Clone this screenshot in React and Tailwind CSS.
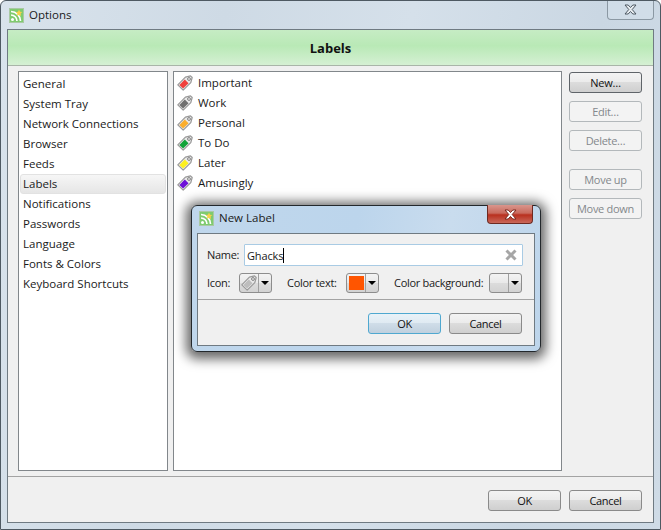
import React from 'react';

const font = { fontFamily: '"Open Sans", "Noto Sans", sans-serif' };

const categories = [
  'General',
  'System Tray',
  'Network Connections',
  'Browser',
  'Feeds',
  'Labels',
  'Notifications',
  'Passwords',
  'Language',
  'Fonts & Colors',
  'Keyboard Shortcuts'
];

const labels = [
  { name: 'Important', color: '#f0403c' },
  { name: 'Work', color: '#6f6f6f' },
  { name: 'Personal', color: '#fbae2c' },
  { name: 'To Do', color: '#12a33a' },
  { name: 'Later', color: '#fdf01e' },
  { name: 'Amusingly', color: '#6d12d8' }
];

const TagIcon = ({ color = '#bdbdbd' }) => (
  <svg width="16" height="16" viewBox="0 0 16 16" className="shrink-0">
    <path d="M0.800 9.800 8.400 2.200 13.500 0.800 15.200 2.500 13.800 7.600 6.200 15.200z" fill="#e9e9e9" stroke="#9a9a9a" strokeWidth="1.200" strokeLinejoin="round" />
    <path d="M2.400 9.900 7.800 4.500 11.500 8.200 6.100 13.600z" fill={color} />
    <circle cx="12" cy="4" r="1.400" fill="#fdfdfd" stroke="#6f6f6f" strokeWidth="0.900" />
  </svg>
);

const AppIcon = () => (
  <svg width="15" height="15" viewBox="0 0 15 15" className="shrink-0">
    <rect x="0.500" y="0.500" width="14" height="14" fill="#7fcb6f" stroke="#a9c9a4" />
    <circle cx="3.500" cy="11.500" r="1.500" fill="#fff" />
    <path d="M2 7a6 6 0 0 1 6 6M2 3.500A9.500 9.500 0 0 1 11.500 13" fill="none" stroke="#fff" strokeWidth="1.700" />
    <path d="M10 1.500l1 2.200 2.300.3-1.700 1.600.5 2.300-2.100-1.200-2.100 1.200.5-2.300L6.700 4l2.300-.3z" fill="#f8d24a" />
  </svg>
);

const CloseGlyph = ({ light }) => (
  <svg width="13" height="11" viewBox="0 0 13 11">
    <path
      d="M1 1h3.200l2.300 2.500L8.800 1H12L8.200 5.500 12 10H8.800L6.500 7.500 4.200 10H1l3.800-4.500z"
      fill={light ? '#fff' : '#e8edf1'}
      stroke={light ? '#7a2a20' : '#4d5862'}
      strokeWidth="1"
      strokeLinejoin="round"
    />
  </svg>
);

const DialogButton = ({ children, disabled, focused, strong, className = '' }) => {
  let look = 'border-[#8a8a8a] bg-[linear-gradient(#f3f3f3_0%,#ebebeb_48%,#dcdcdc_50%,#cfcfcf_100%)] text-[#111]';
  if (disabled) look = 'border-[#b3b8bb] bg-[#f3f3f3] text-[#84888c]';
  if (strong) look = 'border-[#5f6469] bg-[linear-gradient(#f3f3f3_0%,#ebebeb_48%,#dcdcdc_50%,#cfcfcf_100%)] text-[#111]';
  if (focused) look = 'border-[#4fa8d0] bg-[linear-gradient(#e9f2f8_0%,#dfeaf2_48%,#cfdde8_50%,#c0d0de_100%)] text-[#111]';
  return (
    <button
      type="button"
      className={`w-[73px] h-[21px] rounded-[3px] border text-[11px] tracking-[-0.3px] leading-none flex items-center justify-center ${look} ${className}`}
    >
      {children}
    </button>
  );
};

const DropButton = ({ children }) => (
  <div className="h-[20px] w-[33px] shrink-0 rounded-[3px] border border-[#8d8d8d] bg-[linear-gradient(#f3f3f3_0%,#e9e9e9_48%,#dcdcdc_50%,#d2d2d2_100%)] flex">
    <div className="flex-1 flex items-center justify-center border-r border-[#a0a0a0]">{children}</div>
    <div className="w-[12px] flex items-center justify-center">
      <span className="w-0 h-0 border-x-[4px] border-x-transparent border-t-[4px] border-t-black" />
    </div>
  </div>
);

const NewLabelDialog = () => (
  <div className="absolute left-[190px] top-[204px] w-[350px] h-[147px] rounded-[6px] border border-[#23282c] bg-[linear-gradient(100deg,#c0d7ec_0%,#bcd5ec_45%,#c9dcee_70%,#bdd5eb_100%)] shadow-[0_2px_12px_5px_rgba(0,0,0,0.6)] flex flex-col">
    <div className="h-[27px] shrink-0 pl-[7px] pb-[3px] flex items-center gap-[5px] relative">
      <AppIcon />
      <span className="text-[11.5px] text-[#1a1a1a]">New Label</span>
      <div className="absolute right-[7px] top-[-1px] w-[46px] h-[19px] rounded-b-[4px] border border-t-0 border-[#6d2a22] bg-[linear-gradient(#d9958c_0%,#c96a5d_45%,#b9301f_55%,#c9685a_100%)] flex items-center justify-center">
        <CloseGlyph light />
      </div>
    </div>
    <div className="mx-[5px] h-[113px] border border-[#6f7a82] bg-[#f0f0f0] flex flex-col">
      <div className="h-[66px] shrink-0 border-b border-[#a3a3a3] px-[9px] pt-[10px] flex flex-col gap-[7px]">
        <div className="flex items-center h-[22px]">
          <span className="text-[11px] tracking-[-0.3px] text-[#1a1a1a] w-[37px] shrink-0">Name:</span>
          <div className="w-[279px] h-[22px] border border-[#a9cbe4] bg-white rounded-[1px] pl-[2px] pr-[5px] flex items-center justify-between">
            <span className="text-[11px] tracking-[-0.15px] text-[#1a1a1a] border-r border-black leading-[15px]">Ghacks</span>
            <svg width="12" height="12" viewBox="0 0 12 12">
              <path d="M1.500 1.500l9 9M10.500 1.500l-9 9" stroke="#a6a6a6" strokeWidth="3" />
            </svg>
          </div>
        </div>
        <div className="flex items-center h-[20px] w-[316px]">
          <span className="text-[11px] tracking-[-0.3px] text-[#1a1a1a] w-[32px] shrink-0">Icon:</span>
          <DropButton><TagIcon /></DropButton>
          <span className="text-[11px] tracking-[-0.3px] text-[#1a1a1a] ml-[15px] w-[59px] shrink-0 whitespace-nowrap">Color text:</span>
          <DropButton><span className="w-[15px] h-[14px] bg-[#ff5500]" /></DropButton>
          <span className="text-[11px] tracking-[-0.3px] text-[#1a1a1a] ml-[15px] w-[95px] shrink-0 whitespace-nowrap">Color background:</span>
          <DropButton><span className="w-[15px] h-[14px]" /></DropButton>
        </div>
      </div>
      <div className="flex-1 flex justify-end gap-[8px] pt-[13px] pr-[12px]">
        <DialogButton focused>OK</DialogButton>
        <DialogButton>Cancel</DialogButton>
      </div>
    </div>
  </div>
);

export default function App() {
  return (
    <div
      style={font}
      className="relative w-[661px] h-[530px] overflow-hidden rounded-t-[6px] border border-[#4e5962] bg-[linear-gradient(100deg,#d9e3ec_0%,#cedae5_30%,#d5e0ea_55%,#cad7e3_80%,#cfdbe6_100%)] flex flex-col"
    >
      <div className="h-[28px] shrink-0 pl-[8px] flex items-center gap-[5px] relative">
        <AppIcon />
        <span className="text-[11.5px] text-[#1a1a1a]">Options</span>
        <div className="absolute right-[6px] top-[-1px] w-[47px] h-[20px] rounded-b-[4px] border border-t-0 border-[#8b98a3] bg-[#d3dfe9]/70 flex items-center justify-center">
          <CloseGlyph />
        </div>
      </div>

      <div className="mx-[6px] h-[494px] border border-[#6f7a82] bg-[#f0f0f0] flex flex-col">
        <div className="h-[36px] shrink-0 pt-[2px] border-b border-[#a9b5a8] bg-[linear-gradient(#c6ecc4_0%,#b9e9b6_45%,#d5f0d3_100%)] flex items-center justify-center">
          <span className="text-[13px] font-bold text-[#111]">Labels</span>
        </div>

        <div className="flex pl-[10px] pt-[5px] h-[410px] shrink-0">
          <div className="w-[150px] h-[400px] border border-[#82878b] bg-white pt-[2px] px-px">
            {categories.map(item => (
              <div
                key={item}
                className={`h-[20px] flex items-center text-[11.5px] text-[#1a1a1a] rounded-[3px] ${item === 'Labels' ? 'pl-[2px] bg-[linear-gradient(#f6f6f6,#e6e6e6)] border border-[#e2e2e2]' : 'pl-[3px]'}`}
              >
                {item}
              </div>
            ))}
          </div>

          <div className="ml-[5px] w-[389px] h-[400px] border border-[#82878b] bg-white pt-px pl-[3px]">
            {labels.map(label => (
              <div key={label.name} className="h-[20px] flex items-center gap-[5px] text-[11.5px] text-[#1a1a1a]">
                <TagIcon color={label.color} />
                <span>{label.name}</span>
              </div>
            ))}
          </div>

          <div className="ml-[7px] pt-px flex flex-col">
            <DialogButton strong>New…</DialogButton>
            <DialogButton disabled className="mt-[8px]">Edit…</DialogButton>
            <DialogButton disabled className="mt-[8px]">Delete…</DialogButton>
            <DialogButton disabled className="mt-[18px]">Move up</DialogButton>
            <DialogButton disabled className="mt-[8px]">Move down</DialogButton>
          </div>
        </div>

        <div className="flex-1 border-t border-[#a3a3a3] flex justify-end gap-[8px] pt-[13px] pr-[11px]">
          <DialogButton>OK</DialogButton>
          <DialogButton>Cancel</DialogButton>
        </div>
      </div>

      <NewLabelDialog />
    </div>
  );
}
